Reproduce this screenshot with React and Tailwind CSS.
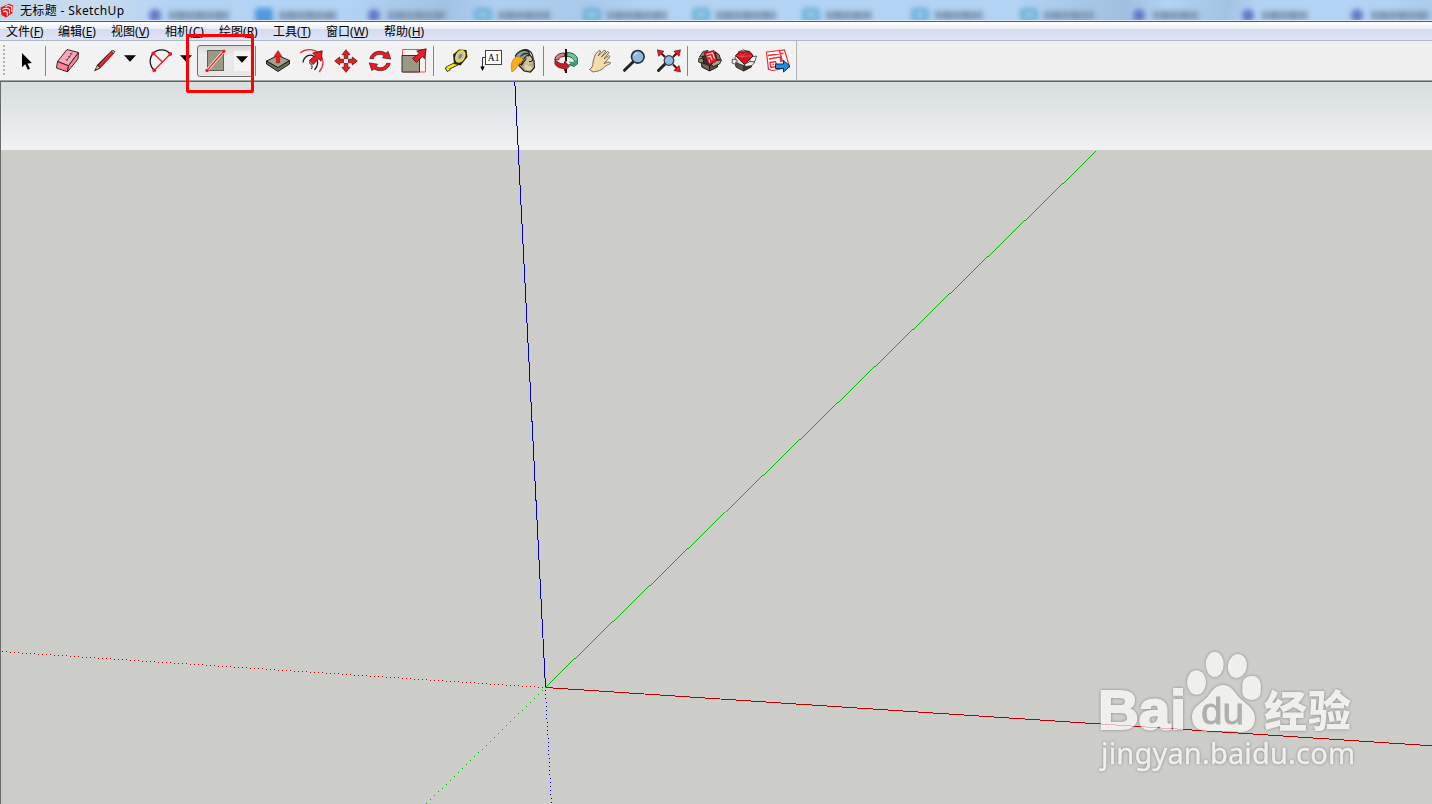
import clsx from "clsx";

const menus = [
  { label: "文件", hotkey: "F", width: "w-[52px]" },
  { label: "编辑", hotkey: "E", width: "w-[53px]" },
  { label: "视图", hotkey: "V", width: "w-[54px]" },
  { label: "相机", hotkey: "C", width: "w-[54px]" },
  { label: "绘图", hotkey: "R", width: "w-[54px]" },
  { label: "工具", hotkey: "T", width: "w-[53px]" },
  { label: "窗口", hotkey: "W", width: "w-[58px]" },
  { label: "帮助", hotkey: "H", width: "w-[52px]" },
];

// Browser tabs that shine through the glass title bar
const tabs = [
  { kind: "purple", bar: "w-[60px]" },
  { kind: "blue", bar: "w-[58px]" },
  { kind: "purple", bar: "w-[58px]" },
  { kind: "teal", bar: "w-[52px]" },
  { kind: "teal", bar: "w-[60px]" },
  { kind: "teal", bar: "w-[60px]" },
  { kind: "teal", bar: "w-[46px]" },
  { kind: "teal", bar: "w-[48px]" },
  { kind: "teal", bar: "w-[50px]" },
  { kind: "purple", bar: "w-[46px]" },
  { kind: "purple", bar: "w-[46px]" },
  { kind: "purple", bar: "w-[58px]" },
];

const Icon = ({ children }) => (
  <svg width="28" height="28" viewBox="0 0 28 28" fill="none" className="shrink-0">
    {children}
  </svg>
);

const Caret = ({ className }) => (
  <svg width="12" height="7" viewBox="0 0 12 7" className={clsx("shrink-0", className)}>
    <path d="M0 .3h12L6 6.8z" fill="#000" />
  </svg>
);

const Separator = ({ className }) => (
  <div className={clsx("h-[30px] w-px shrink-0 bg-[#858585]", className)} />
);

const SelectIcon = () => (
  <Icon>
    <path d="M10 6v14.2l3.2-2.9 2.6 5.5 2.2-1-2.5-5.4 4.3-.3z" fill="#000" />
  </Icon>
);

const EraserIcon = () => (
  <Icon>
    <g stroke="#3d2028" strokeLinejoin="round">
      <path d="M14 2.500 25.500 5.500 15.500 18.800 4.500 14.500z" fill="#f5a9b9" />
      <path d="M4.500 14.500l11 4.300-1 6L3.500 21z" fill="#ff8298" />
      <path d="M15.500 18.800 25.500 5.500l-.5 6.500-10.500 12.800z" fill="#f08a9f" />
    </g>
    <path d="M13.500 14l3.500-5 2-3.500M12.500 12.500l2.500.500M15 9.500l2.500.500M17 6.500l2.500.500" stroke="#6d4450" strokeWidth=".9" />
  </Icon>
);

const PencilIcon = () => (
  <Icon>
    <path d="M4 24.500l3-6.500L21.500 3.500q3-1 4 1.200L10 21.500z" fill="#2a1512" />
    <path d="M8.500 18.500 21 5l2.800 1.800L10.500 20.500z" fill="#d81820" />
    <path d="M9.500 18.200 21.500 5.200" stroke="#ef5a50" />
    <path d="M5.500 22.500l2-3.800 2.200 2z" fill="#e6c98b" />
    <path d="M21.500 4.800l2.500 1.500 1-1.300-2-1.200z" fill="#a4afb0" />
  </Icon>
);

const ArcIcon = () => (
  <Icon>
    <path
      d="M24.300 7C20 1.500 11.500 1.500 7.300 6.300 3 11 3 18.500 8.300 23.300"
      stroke="#111"
      strokeWidth="1.300"
    />
    <path d="M24.300 7l-16 16.300M7.300 6.300l9 8.700" stroke="#ee1b24" strokeWidth="1.300" />
    <g fill="#ee1b24">
      <circle cx="7.300" cy="6.300" r="1.900" />
      <circle cx="24.300" cy="7" r="1.900" />
      <circle cx="8.300" cy="23.300" r="1.900" />
    </g>
  </Icon>
);

const RectangleIcon = () => (
  <Icon>
    <rect x="6.500" y="3.500" width="16" height="20" fill="#9b9984" stroke="#5f5d4f" />
    <path d="M5.800 23.700 23 4" stroke="#fbe3e0" strokeWidth="3" />
    <path d="M5.800 23.700 23 4" stroke="#ee1b24" strokeWidth="1.200" />
    <circle cx="6" cy="23.500" r="1.700" fill="#ee1b24" />
    <circle cx="22.800" cy="4.200" r="1.700" fill="#ee1b24" />
  </Icon>
);

const PushPullIcon = () => (
  <Icon>
    <g stroke="#1d1d18" strokeLinejoin="round">
      <path d="M2.500 14v3l11.500 7.500L25.500 17v-3.500L14 20.500z" fill="#6c6a58" />
      <path d="M2.500 14 14 8.500l11.500 5L14 20.500z" fill="#a3a18b" />
    </g>
    <path d="M14 3.500l4 6h-2.300v6.300h-3.400V9.500H10z" fill="#ee1b24" stroke="#8c0c12" strokeWidth=".5" />
  </Icon>
);

const OffsetIcon = () => (
  <Icon>
    <path d="M2 6C9 .5 19 2 23.500 9.500c2.500 5 2 10-2.300 15.500" stroke="#ee2b35" strokeWidth="1.300" />
    <path d="M5 15.500C6 9 12 6.500 16 9.500c5.500 4 4 9.500.500 13.500" stroke="#1a1a1a" strokeWidth="1.300" />
    <path d="M11 15.500q4.500 3 2.500 6.500" stroke="#1a1a1a" />
    <path
      d="M24.200 3.800l-9.500 2.300 2.500 2.400-6 5.200 3.800 3.800 5.700-5.700 2.400 2.400z"
      fill="#ee1b24"
      stroke="#4c0a0d"
      strokeWidth=".8"
    />
  </Icon>
);

const MoveIcon = () => (
  <Icon>
    {[0, 90, 180, 270].map((angle) => (
      <path
        key={angle}
        d="M14 2.700l4 5h-2.200v3.800h-3.600V7.700H10z"
        fill="#ee1b24"
        stroke="#4c0a0d"
        strokeWidth=".7"
        transform={`rotate(${angle} 14 14)`}
      />
    ))}
  </Icon>
);

const RotateIcon = () => (
  <Icon>
    {[0, 180].map((angle) => (
      <path
        key={angle}
        d="M3.800 11.500C5.500 5 13.500 2 20 6.300l2-2 2.800 7.800-8.300-1.300 1.700-2C13.500 5.800 9 7.500 7.300 11.800z"
        fill="#ee1b24"
        stroke="#4c0a0d"
        strokeWidth=".7"
        transform={`rotate(${angle} 14 14)`}
      />
    ))}
  </Icon>
);

const ScaleIcon = () => (
  <Icon>
    <path d="M2.500 2.500h23v22.500h-23z" fill="#fbf1f0" stroke="#ee5058" />
    <path d="M2 8.500h17.500V25H2z" fill="#9b9984" stroke="#333" />
    <path
      d="M26.200 1.800l-9.500 2.300 2.500 2.400-6.700 5 4 4 5.700-6 2.300 2.200z"
      fill="#ee1b24"
      stroke="#4c0a0d"
      strokeWidth=".8"
    />
  </Icon>
);

const TapeIcon = () => (
  <Icon>
    <path d="M15 16.500 5 21.300M4.500 20l2.500 4" stroke="#222" strokeWidth="4.200" />
    <path d="M15 16.500 5.500 21M5 20.500l1.500 3" stroke="#f4e51a" strokeWidth="2.600" />
    <path d="M11 7.500 17 2.500l7.500.500 1 7-7 8.500-6.500-1.500z" fill="#25251f" />
    <ellipse cx="18.300" cy="9.300" rx="4" ry="6" fill="#c3c3b3" stroke="#efe42a" strokeWidth="1.500" transform="rotate(30 18.300 9.300)" />
    <ellipse cx="18.300" cy="9.300" rx="1.500" ry="2.600" fill="#84847a" transform="rotate(30 18.300 9.300)" />
  </Icon>
);

const TextIcon = () => (
  <Icon>
    <rect x="9.500" y="3.500" width="16" height="14" fill="#fff" stroke="#444" />
    <path d="M9.500 10.500h-3V21" stroke="#333" />
    <path d="M4.300 19.500h4.400L6.500 24z" fill="#000" />
    <text x="17.600" y="13.500" fontSize="9.500" textAnchor="middle" fontFamily="Liberation Serif, serif" fill="#000">
      A1
    </text>
  </Icon>
);

const PaintIcon = () => (
  <Icon>
    <g transform="translate(-1.500 0)">
      <path d="M20 6l5.500 7.500.5 7-4 4.500-6.500-1L9 17z" fill="#b9a983" stroke="#23231e" strokeWidth="1.200" />
      <path d="M17 17c-2 2-1 5.500 2 6.500 2.500.5 4.500-1 5-3z" fill="#e0d3ab" />
      <path d="M7 8.500C9 5 13.500 2.500 18 3.500c2 .5 3 2.500 3 4.500L13 18l-4-2z" fill="#8b9f98" stroke="#20241f" strokeWidth="1.300" />
      <path d="M12 9.500C14 7 17 6 20 6.500M13 18C14 13 17 9 20.500 7.500" stroke="#20241f" strokeWidth="1.100" />
      <path d="M15 16q3.500-3 3-6.500 5-1 5.500 4.500-.5 3-4 4z" fill="#cdbf98" />
      <path d="M13.500 3.500C19 1 24 4.500 24.500 11q0 4-4 3.500" stroke="#20241f" strokeWidth="1.200" />
      <path d="M3.500 25C1.500 18 3.500 12 8 9.500c2.500.5 6.500 1.500 7 3.500C9.500 16 8.500 22.500 3.500 25z" fill="#fcae1e" stroke="#b87512" strokeWidth=".6" />
    </g>
  </Icon>
);

const OrbitIcon = () => (
  <Icon>
    <path d="M15 5.500c6 0 10.500 3 10.500 7v4.500l-3.500 2.500-5-2 3.500-1c2-1 2.500-2.500 1-4C20 10.500 18 9.500 15 9.500z" fill="#6cc295" stroke="#1b5437" strokeWidth=".9" />
    <path d="M16.500 14.500l6 .5 3-2.500V17l-3.500 3z" fill="#3c9d6d" />
    <path d="M12.500 6C7 6 3 8.500 3 12.500l3.500.5C7 10.500 9 9.500 12.500 9.500z" fill="#d98085" stroke="#6b1018" strokeWidth=".9" />
    <path d="M3 12.500V17c1.500 3 5 4.500 9.500 4.500V24l5-5-5-4.500V17C8.500 17 5 15.500 3 12.500z" fill="#c5202c" stroke="#6b1018" strokeWidth=".9" />
    <path d="M14 2v12.500M14 22v4" stroke="#111" strokeWidth="2" />
  </Icon>
);

const HandIcon = () => (
  <Icon>
    <path
      d="M3.500 22.500c2.500-1.500 3.500-4 3.500-7.500L9 8l4-4.500 1.700.5-2.500 5L18 3.200l1.800.8-4.300 6 6-5.500 1.500 1-5 6.500 4.800-3.500 1.200 1.200-6 7c2.500-1.500 5-2 6.500-1 .500 1.800-4 1.800-6 4.300-2.500 2.500-4 3.500-6.500 4l-2.500.500-2.500.500z"
      fill="#f3dcae"
      stroke="#5d4f35"
      strokeLinejoin="round"
      strokeWidth=".8"
    />
  </Icon>
);

const ZoomIcon = () => (
  <Icon>
    <path d="M13 15 4.500 23.300" stroke="#222" strokeWidth="3" strokeLinecap="round" />
    <circle cx="17.800" cy="9.800" r="6.300" fill="#8fb9de" stroke="#232d38" strokeWidth="1.600" />
    <path d="M14 8.500q1-2.500 4-2.800" stroke="#c9def0" strokeWidth="1.200" />
  </Icon>
);

const ZoomExtentsIcon = () => (
  <Icon>
    <path d="M11 17l-6.500 6.500" stroke="#222" strokeWidth="3" strokeLinecap="round" />
    <path d="M6 5l5 5M24 5l-5 5M24 22.500l-5-5" stroke="#4c0a0d" strokeWidth="2" />
    <g fill="#ee1b24" stroke="#4c0a0d" strokeWidth=".6">
      <path d="M3.300 2.800l6.700 1.500-5.300 5z" />
      <path d="M26.500 2.800l-6.700 1.500 5.300 5z" />
      <path d="M26.500 25l-6.700-1.500 5.300-5z" />
    </g>
    <circle cx="15" cy="13.500" r="4.800" fill="#8fb9de" stroke="#333c45" strokeWidth="1.300" />
  </Icon>
);

const WarehouseIcon = () => (
  <Icon>
    <g stroke="#1b1a15" strokeLinejoin="round" strokeWidth=".9">
      <path d="M6 10 20 5l1 14-7.500 4.500L6 20z" fill="#33322a" />
      <path d="M7 4.500l5-1L8 9l-4.500 1z" fill="#8f8c75" />
      <path d="M19 5l4 2.500 2 6-4-1z" fill="#77745f" />
      <path d="M3 11l4.500 1v5l-5-2z" fill="#8f8c75" />
      <path d="M5.500 15.500l8 3v5.500l-7.500-4z" fill="#6a6855" />
      <path d="M13.500 18.500l8-3.500v5l-8 4z" fill="#504e40" />
      <path d="M20 13.500l5.500-.5-2 4-6 2.500-2.500-2z" fill="#a5a28a" />
    </g>
    <path d="M8 6 18 3.500l3 10-8 4.500z" fill="#e3202a" stroke="#7d0a10" strokeWidth=".8" />
    <path d="M10.500 7.500l6-1.500 2 5.500M11.500 10l3-.8 1.500 4M13 12.500l.7 3" stroke="#ffdada" strokeWidth="1.100" />
  </Icon>
);

const ExtensionIcon = () => (
  <Icon>
    <g stroke="#333" strokeLinejoin="round" strokeWidth=".8">
      <path d="M5 10 13 3l9 4-1 13-7 4-8-4z" fill="#dededb" />
      <path d="M8 5l5-2 7 1.500 3 4-5 2z" fill="#f4f4f2" />
      <path d="M20 10l6.500-1-1.500 5-5 3z" fill="#f4f4f2" />
      <path d="M2.500 12l4.500 1v5l-5-2z" fill="#f4f4f2" />
      <path d="M5.500 15.500l8 3v5.500l-7.500-4z" fill="#55534a" />
      <path d="M13.500 18.500l8-3.500v5l-8 4z" fill="#33322d" />
      <path d="M20 14.500l5 .5-3 3.500-6 1-2-2z" fill="#ededeb" />
    </g>
    <path d="M5.500 8.500 9.500 5l9.500-.500 4 4.500L14.500 17.500z" fill="#d4141e" stroke="#5c060b" strokeWidth=".9" />
    <path d="M7 8.500l5 1.500 4-1 6 0M10.500 6l1.500 4 4-4.500" stroke="#ff6068" strokeWidth=".7" />
  </Icon>
);

const LayoutIcon = () => (
  <Icon>
    <path d="M2.500 5 20.500 3l5 17-16.500 3.500-4.500-1z" fill="#fff" stroke="#ee2b35" strokeWidth="1.200" />
    <path d="M4 8.500l15.500-2.200M5 12l11-2 1 5M15.500 3.800l3 11M6 15.500l5.500-1 1.500 5-6 1zM8.500 17.500l1.500-.3" stroke="#ee2b35" strokeWidth="1.400" />
    <path d="M11.500 17h8v-3.500l6.500 5.700-6.500 5.800v-3.500h-8z" fill="#1e8ce8" stroke="#0b2b4d" />
  </Icon>
);

const Logo = () => (
  <svg width="14" height="15" viewBox="0 0 14 15" className="shrink-0">
    <path d="M.5 4.500 9 .8l4.300 1.700L12.500 10 6 14.500 1.500 12z" fill="#e0181f" />
    <path d="M2.500 6.500 6 5l3.500 1.300v4.500M3 9l2.500-.8 1.700.8v3.500M5.500 3.500 8.500 2.500l3.300 1.300v5" stroke="#fff" strokeWidth="1.100" fill="none" />
  </svg>
);

const TitleBar = () => (
  <header className="relative h-[22px] shrink-0 overflow-hidden border-b border-[#4f5b6b] bg-[linear-gradient(100deg,#c2d6ea_0px,#c9dcef_90px,#b2d3f4_170px,#b2d3f4_340px,#a2c2e4_440px,#afd0f1_490px,#a9c9ea_580px,#b3d3f4_640px,#b3d3f4_1000px,#a0bfdf_1110px,#b3d3f4_1150px,#a3c3e3_1210px,#b3d3f4_1240px,#b3d3f4_1360px,#a8c9ea_1432px)]">
    <div className="flex h-[21px] items-center pl-[146px] pt-[9px]">
      {tabs.map((tab, i) => (
        <div key={i} className="flex w-[109.300px] shrink-0 items-center blur-[2.500px]">
          <span
            className={clsx("shrink-0", {
              "ml-[3px] mr-[8px] h-[13px] w-[12px] rounded-full bg-[#6578c8]": tab.kind === "purple",
              "mr-[6px] h-[15px] w-[18px] rounded bg-[#5298dd]": tab.kind === "blue",
              "mr-[6px] h-[14px] w-[18px] rounded border-[4px] border-[#6ab0d8] bg-[#98c8e5]": tab.kind === "teal",
            })}
          />
          <span
            className={clsx(
              "h-[9px] bg-[repeating-linear-gradient(90deg,#7d97b1_0px,#8ea8c4_7px,#7790ab_12px,#92adc9_19px)]",
              tab.bar
            )}
          />
        </div>
      ))}
    </div>
    <div className="absolute left-0 top-[3px] flex items-center">
      <Logo />
      <h1 className="ml-[6px] whitespace-pre text-[12px] leading-[15px] tracking-[0.350px] text-black">无标题 - SketchUp</h1>
    </div>
    <div className="absolute bottom-0 h-px w-full bg-[#dce9f6]" />
  </header>
);

const MenuBar = () => (
  <nav className="flex h-[19px] shrink-0 border-b border-[#b2b8cb] bg-[linear-gradient(#ffffff_0px,#e9edf5_7px,#d5dbee_7px,#dfe4f6_18px)] pl-[6px] text-[12px] leading-[19px] text-black">
    {menus.map(({ label, hotkey, width }) => (
      <span key={hotkey} className={clsx("shrink-0 whitespace-nowrap", width)}>
        {label}(<u className="underline-offset-1">{hotkey}</u>)
      </span>
    ))}
  </nav>
);

const Toolbar = () => (
  <div className="h-[41px] shrink-0 border-b border-[#62665f] bg-[#efefef]">
    <div className="h-[40px] border-b border-[#a3a49f]">
      <div className="flex h-[39px] w-[797px] items-center border-r border-[#b4b4b4] bg-[#f2f2f2]">
        <div className="ml-[3px] mr-[7px] h-[32px] w-[2px] shrink-0 bg-[repeating-linear-gradient(#b0b0b0_0px,#b0b0b0_2px,transparent_2px,transparent_4px)]" />
        <SelectIcon />
        <Separator className="ml-[5px] mr-[7px]" />
        <EraserIcon />
        <div className="ml-[9px] flex items-center">
          <PencilIcon />
          <Caret className="mb-[4px] ml-[6px]" />
        </div>
        <div className="ml-[10px] flex items-center">
          <ArcIcon />
          <Caret className="mb-[4px] ml-[6px]" />
        </div>
        {/* Active tool */}
        <div className="ml-[5px] flex h-[32px] w-[56px] shrink-0 items-center rounded-[3px] border border-[#6f6f6f] bg-[linear-gradient(#d9d9d9,#ebebeb_30%,#e6e6e6)] pl-[3px]">
          <RectangleIcon />
          <span className="ml-[5px] flex h-[20px] w-[16px] justify-center bg-[#f4f4f4] pt-[5px]">
            <Caret />
          </span>
        </div>
        <Separator className="ml-[2px] mr-[8px]" />
        <div className="flex gap-[6px]">
          <PushPullIcon />
          <OffsetIcon />
          <MoveIcon />
          <RotateIcon />
          <ScaleIcon />
        </div>
        <Separator className="ml-[5px] mr-[8px]" />
        <div className="flex gap-[6px]">
          <TapeIcon />
          <TextIcon />
          <PaintIcon />
        </div>
        <Separator className="ml-[5px] mr-[8px]" />
        <div className="flex gap-[6px]">
          <OrbitIcon />
          <HandIcon />
          <ZoomIcon />
          <ZoomExtentsIcon />
        </div>
        <Separator className="ml-[5px] mr-[8px]" />
        <div className="flex gap-[6px]">
          <WarehouseIcon />
          <ExtensionIcon />
          <LayoutIcon />
        </div>
      </div>
    </div>
  </div>
);

// Negative half of an axis: one pixel every four
const DottedAxis = ({ x, y, dx, dy, count, color }) => (
  <g fill={color}>
    {Array.from({ length: count }, (_, i) => (
      <rect key={i} x={Math.round(x + dx * i)} y={Math.round(y + dy * i)} width="1" height="1" />
    ))}
  </g>
);

const Axes = () => (
  <svg
    width="1431"
    height="722"
    viewBox="1 82 1431 722"
    className="absolute inset-0"
    shapeRendering="crispEdges"
  >
    <DottedAxis x={542} y={687} dx={-4} dy={-0.265} count={136} color="#b80000" />
    <DottedAxis x={542} y={690} dx={-4} dy={3.9} count={30} color="#00b400" />
    <DottedAxis x={545} y={690} dx={0.21} dy={4} count={29} color="#0000b8" />
    <path d="M545.500 687.500 1432 745.800" stroke="#b80000" />
    {/* Filled sliver: a stroke would double pixels on this slope */}
    <path d="M545 687.200 1096 150.900v1L545 688.200z" fill="#00b400" />
    <path d="M545.500 687.500 514.800 82" stroke="#0000b8" />
  </svg>
);

const Watermark = () => (
  <svg
    width="280"
    height="140"
    viewBox="1085 642 280 140"
    className="absolute bottom-[22px] right-[67px] opacity-70 drop-shadow-[0_0_1.500px_#666666]"
  >
    <g fill="#fff">
      <ellipse cx="1196.500" cy="682.500" rx="9.500" ry="12.200" />
      <ellipse cx="1214.700" cy="664.300" rx="9" ry="12.500" />
      <ellipse cx="1237.300" cy="666" rx="9.500" ry="12" transform="rotate(10 1237.300 666)" />
      <rect x="1242.300" y="676" width="18.500" height="24" rx="8.500" />
      <path d="M1223 685c6 0 10 4 14 10 5 7 18 12 18 23 0 9-6 14-14 14-6 0-10-1-18-1s-11 0-16 0c-9 0-15-5-15-14 0-11 11-14 17-22 4-6 8-10 14-10z" />
      <text x="1098" y="729" fontSize="55" fontWeight="700" textLength="88" lengthAdjust="spacingAndGlyphs" stroke="#fff" strokeWidth="2" fontFamily="Liberation Sans, sans-serif">
        Bai
      </text>
      <text x="1264" y="727" fontSize="43" fontWeight="900" textLength="87" fontFamily="Noto Sans CJK SC, sans-serif">
        经验
      </text>
      <text x="1101" y="764" fontSize="29" textLength="254" stroke="#fff" strokeWidth=".4" fontFamily="Noto Sans, sans-serif">
        jingyan.baidu.com
      </text>
    </g>
    <text x="1201" y="724" fontSize="36" textLength="43" lengthAdjust="spacingAndGlyphs" fill="#a4a4a0" stroke="#a4a4a0" strokeWidth=".8" fontFamily="Liberation Sans, sans-serif">
      du
    </text>
  </svg>
);

const Viewport = () => (
  <main className="relative min-h-0 flex-1 border-l border-[#6b6b6b] bg-[linear-gradient(#d7dddf_0px,#e4e8e9_38px,#f0f1f3_68px,#cccdc8_68px)]">
    <Axes />
    <Watermark />
  </main>
);

export default function App() {
  return (
    <div className="relative flex h-[804px] w-[1432px] flex-col overflow-hidden bg-[#cccdc8] font-['Noto_Sans','Noto_Sans_CJK_SC',sans-serif]">
      <TitleBar />
      <MenuBar />
      <Toolbar />
      <Viewport />
      {/* Callout around the rectangle tool */}
      <div className="absolute left-[186px] top-[34px] h-[59px] w-[68px] rounded-[2px] border-[3px] border-[#ff0000]" />
    </div>
  );
}
